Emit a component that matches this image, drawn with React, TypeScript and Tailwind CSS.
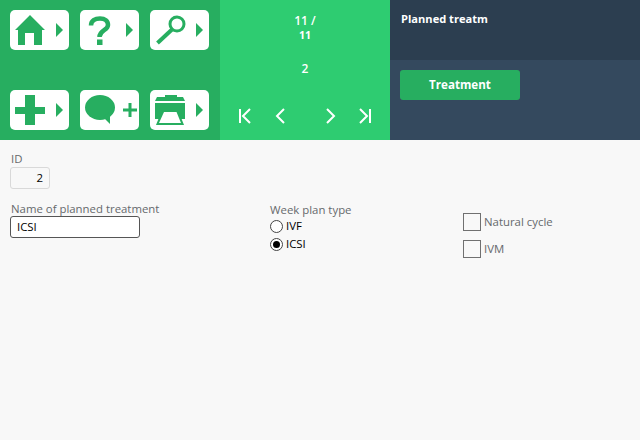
import React from "react";

const GREEN = "#27ae60";

const Arrow = () => <polygon points="46,13 53,20 46,27" fill={GREEN} />;

const ToolButton = ({ children }: { children: React.ReactNode }) => (
  <button className="w-[59px] h-10 bg-white rounded-[5px] block">
    <svg width="59" height="40" viewBox="0 0 59 40" className="block">
      {children}
    </svg>
  </button>
);

const Checkbox = ({ label }: { label: string }) => (
  <div className="flex items-center gap-[3px] h-[18px]">
    <span className="w-[18px] h-[18px] border border-[#707070] bg-[#f8f8f8]" />
    <span className="text-[#66696c]">{label}</span>
  </div>
);

const Radio = ({ label, checked }: { label: string; checked?: boolean }) => (
  <div className="flex items-center gap-[3px] h-[18px]">
    <span className="w-[13px] h-[13px] rounded-full border border-[#444] bg-white flex items-center justify-center">
      {checked && <span className="w-[7px] h-[7px] rounded-full bg-black" />}
    </span>
    <span className="text-black">{label}</span>
  </div>
);

export default function App() {
  return (
    <div className="w-[640px] h-[440px] bg-[#f8f8f8] overflow-hidden font-['Open_Sans','Noto_Sans',sans-serif] text-[11.4px]">
      <header className="flex h-[140px]">
        <div className="w-[220px] bg-[#27ae60] p-[10px] grid grid-cols-[59px_59px_59px] gap-x-[11px] gap-y-10 content-start">
          <ToolButton>
            <path d="M20 5 L35 20 H32 V35 H24 V23 H15 V35 H8 V20 H5 Z" fill={GREEN} />
            <Arrow />
          </ToolButton>
          <ToolButton>
            <path d="M11 15.5 C11 10.5 15 8.5 20 8.5 C25 8.5 28 11 28 15 C28 20.5 19.5 20 19.5 27" fill="none" stroke={GREEN} strokeWidth="4.5" />
            <rect x="17" y="29.5" width="5.5" height="5.5" fill={GREEN} />
            <Arrow />
          </ToolButton>
          <ToolButton>
            <circle cx="27" cy="14" r="7" fill="none" stroke={GREEN} strokeWidth="3" />
            <line x1="22" y1="19.5" x2="7.5" y2="33" stroke={GREEN} strokeWidth="4" />
            <Arrow />
          </ToolButton>
          <ToolButton>
            <path d="M15 5 H25 V17 H35 V24 H25 V35 H15 V24 H5 V17 H15 Z" fill={GREEN} />
            <Arrow />
          </ToolButton>
          <ToolButton>
            <ellipse cx="20" cy="17.5" rx="15" ry="12.5" fill={GREEN} />
            <polygon points="23,27 30,34 30,22" fill={GREEN} />
            <path d="M48.5 13 H51.5 V18.5 H57 V21.5 H51.5 V27 H48.5 V21.5 H43 V18.5 H48.5 Z" fill={GREEN} />
          </ToolButton>
          <ToolButton>
            <path d="M15 5 H27 V7 H33 L35 11 H5 L7 7 H15 Z" fill={GREEN} />
            <rect x="5" y="13" width="30" height="16" fill={GREEN} />
            <polygon points="12,20 28,20 34,35 6,35" fill={GREEN} />
            <polygon points="14,22 26.5,22 31,33 9,33" fill="#fff" />
            <Arrow />
          </ToolButton>
        </div>

        <div className="w-[170px] bg-[#2ecc71] text-white font-semibold text-center flex flex-col items-center relative">
          <div className="mt-[13px] text-[12px] leading-4">11 /</div>
          <div className="text-[10.5px] leading-[12px] font-bold">11</div>
          <div className="mt-[20px] text-[12px] leading-4">2</div>
          <div className="mt-auto mb-[16px] w-full">
            <svg width="170" height="16" viewBox="0 0 170 16" fill="none" stroke="#fff" strokeWidth="2" className="block">
              <path d="M20 1 V15 M30 1 L23 8 L30 15" />
              <path d="M64 1 L57 8 L64 15" />
              <path d="M107 1 L114 8 L107 15" />
              <path d="M140 1 L147 8 L140 15 M150 1 V15" />
            </svg>
          </div>
        </div>

        <div className="flex-1 flex flex-col bg-[#34495e]">
          <div className="h-[60px] bg-[#2c3e50] pl-[11px] pt-[11px] text-white font-bold text-[11.1px] leading-4">
            Planned treatm
          </div>
          <div className="pl-[10px] pt-[10px]">
            <button className="w-[120px] h-[30px] bg-[#27ae60] rounded-[3px] text-white font-bold text-[11.6px]">
              Treatment
            </button>
          </div>
        </div>
      </header>

      <main className="flex pl-[10px] pt-[11px]">
        <div className="w-[260px]">
          <div className="text-[#66696c] leading-[15px] pl-px">ID</div>
          <div className="w-10 h-[22px] mt-px border border-[#d9d9d9] rounded-[3px] text-right pr-[6px] leading-5 text-black">
            2
          </div>
          <div className="text-[#66696c] leading-[15px] mt-[12px] pl-px">Name of planned treatment</div>
          <div className="w-[130px] h-[22px] border border-[#555] rounded-[3px] bg-white pl-[6px] leading-5 text-black">
            ICSI
          </div>
        </div>
        <div className="w-[193px] pt-[51px]">
          <div className="text-[#66696c] leading-[15px]">Week plan type</div>
          <Radio label="IVF" />
          <Radio label="ICSI" checked />
        </div>
        <div className="pt-[62px] flex flex-col gap-[9px]">
          <Checkbox label="Natural cycle" />
          <Checkbox label="IVM" />
        </div>
      </main>
    </div>
  );
}
